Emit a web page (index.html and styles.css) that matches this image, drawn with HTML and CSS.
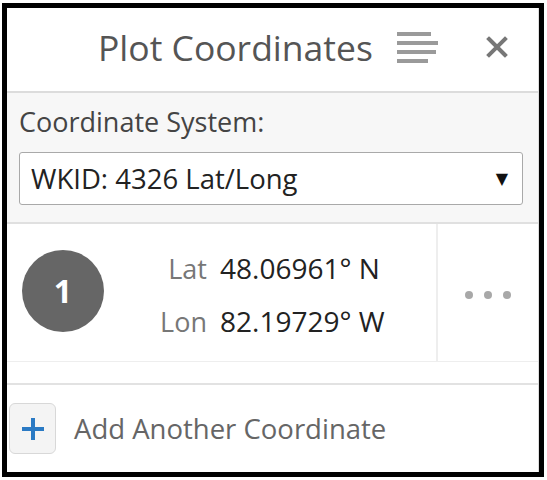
FILE: index.html
```html
<!DOCTYPE html>
<html lang="en">
<head>
<meta charset="utf-8">
<title>Plot Coordinates</title>
<link rel="stylesheet" href="styles.css">
</head>
<body>
<div class="frame">
  <div class="panel">
    <header class="header">
      <h1 class="title">Plot Coordinates</h1>
      <button class="icon-btn menu-btn" aria-label="Menu">
        <svg width="42" height="32" viewBox="0 0 42 32">
          <rect x="0" y="1" width="34" height="4" fill="#9a9a9a"/>
          <rect x="0" y="10" width="41" height="4" fill="#9a9a9a"/>
          <rect x="0" y="19" width="39" height="4" fill="#9a9a9a"/>
          <rect x="0" y="28" width="31" height="4" fill="#9a9a9a"/>
        </svg>
      </button>
      <button class="icon-btn close-btn" aria-label="Close">
        <svg width="22" height="22" viewBox="0 0 22 22">
          <path d="M3 3 L19 19 M19 3 L3 19" stroke="#777" stroke-width="4" stroke-linecap="square"/>
        </svg>
      </button>
    </header>
    <section class="system">
      <div class="system-label">Coordinate System:</div>
      <div class="select">
        <span class="select-text">WKID: 4326 Lat/Long</span>
        <span class="caret">&#9660;</span>
      </div>
    </section>
    <div class="coord-row">
      <div class="badge-cell"><div class="badge">1</div></div>
      <div class="values">
        <div class="line"><span class="key">Lat</span><span class="val">48.06961° N</span></div>
        <div class="line"><span class="key">Lon</span><span class="val">82.19729° W</span></div>
      </div>
      <div class="more"><span class="dot"></span><span class="dot"></span><span class="dot"></span></div>
    </div>
    <div class="gap"></div>
    <div class="add-row">
      <span class="add-btn">
        <svg width="24" height="24" viewBox="0 0 24 24">
          <path d="M12 1 V23 M1 12 H23" stroke="#2a7ac4" stroke-width="4"/>
        </svg>
      </span>
      <span class="add-text">Add Another Coordinate</span>
    </div>
  </div>
</div>
</body>
</html>
```

FILE: styles.css
```css
* { box-sizing: border-box; }
html, body { margin: 0; padding: 0; background: #fff; }
body {
  font-family: "Open Sans", "Noto Sans", "Liberation Sans", sans-serif;
  padding: 3px 0 0 2px;
}
.frame {
  width: 542px;
  height: 474px;
  border: 5px solid #000;
}
.panel {
  height: 100%;
  border-right: 1px solid #ddd;
  display: flex;
  flex-direction: column;
}
.header {
  height: 85px;
  flex: none;
  display: flex;
  align-items: center;
  border-bottom: 2px solid #dcdcdc;
  padding: 0 28px 6px 0;
}
.title {
  margin: 0 0 0 91px;
  font-size: 35.5px;
  font-weight: 400;
  color: #555;
  line-height: 44px;
}
.icon-btn {
  border: 0;
  background: none;
  padding: 0;
  display: flex;
}
.menu-btn { margin-left: 24px; }
.close-btn { margin-left: 47px; }
.system {
  background: #f7f7f7;
  height: 131px;
  flex: none;
  border-bottom: 2px solid #e0e0e0;
  padding: 12px 15px 0 12px;
}
.system-label {
  font-size: 27px;
  color: #444;
  line-height: 34px;
}
.select {
  margin-top: 13px;
  height: 53px;
  background: #fff;
  border: 1.5px solid #a9a9a9;
  border-radius: 3px;
  display: flex;
  align-items: center;
  justify-content: space-between;
  padding: 0 14px 0 11px;
}
.select-text {
  font-size: 27.5px;
  color: #222;
}
.caret { font-size: 16px; color: #111; font-family: "DejaVu Sans", sans-serif; }
.coord-row {
  height: 138px;
  flex: none;
  display: flex;
  border-bottom: 1px solid #eee;
}
.badge-cell {
  width: 120px;
  display: flex;
  align-items: center;
  padding-left: 15px;
}
.badge {
  width: 82px;
  height: 82px;
  border-radius: 50%;
  background: #666;
  color: #fff;
  font-size: 32px;
  font-weight: 700;
  display: flex;
  align-items: center;
  justify-content: center;
  margin-top: -4px;
}
.values {
  flex: 1;
  display: flex;
  flex-direction: column;
  justify-content: center;
  gap: 10px;
  padding-top: 4px;
}
.line {
  display: flex;
  align-items: baseline;
  line-height: 42px;
}
.key {
  width: 80px;
  text-align: right;
  font-size: 27px;
  color: #777;
}
.val {
  margin-left: 13px;
  font-size: 28px;
  color: #222;
}
.more {
  width: 102px;
  border-left: 2px solid #eee;
  display: flex;
  align-items: center;
  justify-content: center;
  gap: 11px;
  padding-top: 4px;
}
.dot {
  width: 8px;
  height: 8px;
  border-radius: 50%;
  background: #a8a8a8;
}
.gap {
  height: 23px;
  flex: none;
  border-bottom: 2px solid #e2e2e2;
}
.add-row {
  flex: 1;
  display: flex;
  align-items: center;
  padding-left: 2px;
}
.add-btn {
  width: 47px;
  height: 51px;
  border: 1.5px solid #d8d8d8;
  border-radius: 6px;
  background: #f4f4f4;
  display: flex;
  align-items: center;
  justify-content: center;
}
.add-text {
  margin-left: 18px;
  font-size: 27.5px;
  color: #666;
}
```
